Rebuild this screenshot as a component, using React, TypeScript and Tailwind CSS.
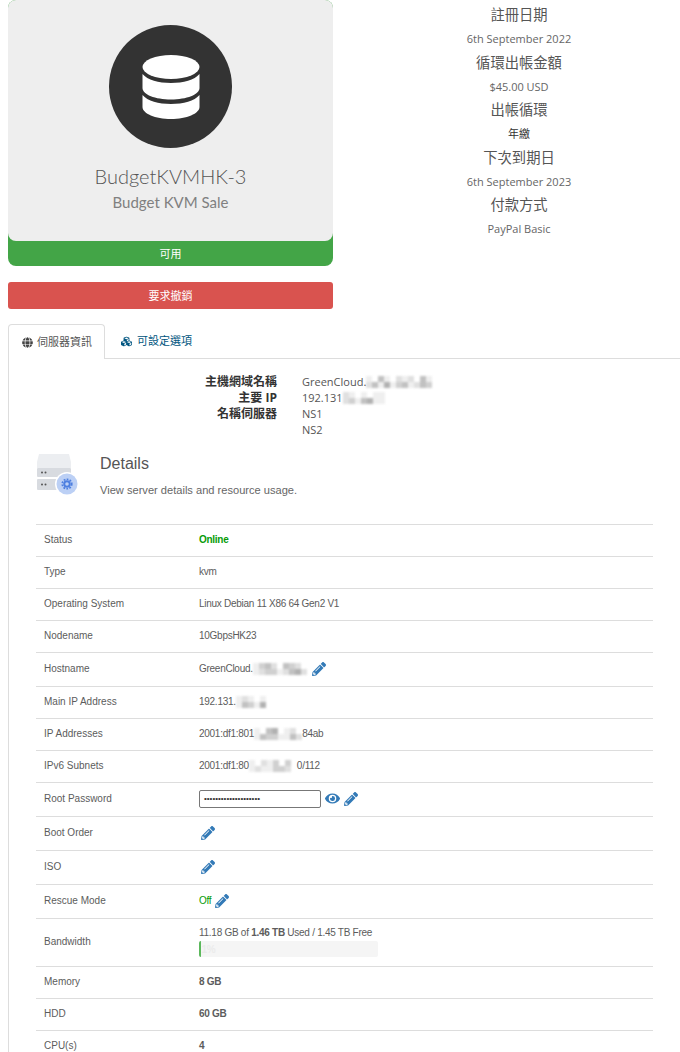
import React from 'react';
import { FaGlobe, FaCubes, FaPencilAlt, FaEye } from 'react-icons/fa';

const arial = 'font-["Liberation_Sans",Arial,"Noto_Sans_CJK_TC",sans-serif]';
const open = 'font-["Open_Sans","Noto_Sans_CJK_TC",sans-serif]';

const billing = [
  { label: '註冊日期', value: '6th September 2022' },
  { label: '循環出帳金額', value: '$45.00 USD' },
  { label: '出帳循環', value: '年繳', dark: true },
  { label: '下次到期日', value: '6th September 2023' },
  { label: '付款方式', value: 'PayPal Basic' },
];

// mosaic over the redacted parts, one string per row, digit = grey strength
function Blur({ rows }: { rows: string[] }) {
  return (
    <span className="inline-flex flex-col align-middle blur-[1px]">
      {rows.map((row, i) => (
        <span key={i} className="flex h-[6px]">
          {row.split('').map((c, j) => (
            <span key={j} className="w-[6px] h-[6px]" style={{ backgroundColor: `rgba(100,100,100,${Number(c) / 10})` }} />
          ))}
        </span>
      ))}
    </span>
  );
}

function Pencil({ className = '' }: { className?: string }) {
  return <FaPencilAlt className={`w-[14px] h-[14px] text-[#337ab7] ${className}`} />;
}

function Row({ label, h = 'h-[32px]', children }: { label: string; h?: string; children: React.ReactNode }) {
  return (
    <div className={`flex items-center border-t border-[#dddddd] pb-[2px] ${h}`}>
      <div className="w-[163px] pl-[8px] shrink-0">{label}</div>
      <div className="flex-1 flex items-center tracking-[-0.27px]">{children}</div>
    </div>
  );
}

export default function App() {
  return (
    <div className={`w-[680px] h-[1052px] overflow-hidden bg-white text-[#555555] ${open}`}>
      {/* top block */}
      <div className="flex">
        <div className="w-[325px] ml-[8px] shrink-0">
          <div className="rounded-[8px] bg-[#43a547] h-[266px]">
            <div className="h-[241px] rounded-[8px] bg-[#eeeeee] flex flex-col items-center pt-[25px]">
              <div className="w-[123px] h-[123px] rounded-full bg-[#333333] flex items-center justify-center">
                <svg viewBox="0 0 58 64" className="w-[58px] h-[64px]" fill="#ffffff">
                  <ellipse cx="29" cy="12" rx="28.5" ry="12" />
                  <path d="M.5 19c5 6 16 9 28.500 9s23.500-3 28.500-9v14c0 6.500-12.800 11.500-28.500 11.500S.5 39.500.5 33z" />
                  <path d="M.5 40c5 6 16 9 28.500 9s23.500-3 28.500-9v12c0 6.500-12.800 12-28.500 12S.5 58.500.5 52z" />
                </svg>
              </div>
              <div className="mt-[13px] text-[20px] leading-[30px] font-light text-[#555555] font-['Lato',sans-serif]">BudgetKVMHK-3</div>
              <div className="text-[15px] leading-[22px] text-[#808080] font-['Lato',sans-serif]">Budget KVM Sale</div>
            </div>
            <div className="h-[25px] pt-[1px] flex items-center justify-center text-white text-[11px]">可用</div>
          </div>
          <div className="mt-[16px] h-[27px] pt-[1px] rounded-[3px] bg-[#d9534f] flex items-center justify-center text-white text-[11px]">要求撤銷</div>
        </div>

        <div className="flex-1 ml-[25px] pt-[3px] text-center">
          {billing.map((b) => (
            <div key={b.label}>
              <div className="h-[24px] leading-[24px] text-[14.300px] text-[#555555]">{b.label}</div>
              <div className={`h-[23.500px] leading-[24px] text-[11px] ${b.dark ? 'text-[#333333]' : 'text-[#666666]'}`}>{b.value}</div>
            </div>
          ))}
        </div>
      </div>

      {/* tabs */}
      <div className="mt-[15px] ml-[8px] flex border-b border-[#dddddd] h-[35px] text-[11px]">
        <div className="w-[97px] h-[35px] bg-white border border-b-0 border-[#dddddd] rounded-t-[4px] flex items-center gap-[4px] pl-[13px]">
          <FaGlobe className="w-[11px] h-[11px] text-[#444444]" />
          <span>伺服器資訊</span>
        </div>
        <div className="flex items-center gap-[5px] pl-[16px] text-[#005580]">
          <FaCubes className="w-[11px] h-[11px]" />
          <span>可設定選項</span>
        </div>
      </div>

      {/* tab content */}
      <div className="ml-[8px] border-l border-[#dddddd] h-[700px]">
        <div className="pt-[15px] text-[11px] leading-[16px]">
          <div className="flex">
            <div className="w-[268px] text-right text-[12px] font-bold text-[#333333]">主機網域名稱</div>
            <div className="ml-[25px] flex items-center h-[16px]">GreenCloud.<Blur rows={['10410212041', '24151341243']} /></div>
          </div>
          <div className="flex">
            <div className="w-[268px] text-right text-[12px] font-bold text-[#333333]">主要 IP</div>
            <div className="ml-[25px] flex items-center h-[16px]">192.131<Blur rows={['2101011', '2314511']} /></div>
          </div>
          <div className="flex">
            <div className="w-[268px] text-right text-[12px] font-bold text-[#333333]">名稱伺服器</div>
            <div className="ml-[25px]">NS1</div>
          </div>
          <div className="flex">
            <div className="w-[268px]" />
            <div className="ml-[25px]">NS2</div>
          </div>
        </div>

        {/* module details */}
        <div className={`pl-[27px] pr-[27px] ${arial}`}>
          <div className="flex h-[86px] pt-[14px]">
            <svg viewBox="0 0 44 44" className="w-[44px] h-[44px] shrink-0">
              <path d="M3 2h30l2 8v6H1v-6z" fill="#eceef1" />
              <rect x="1" y="16" width="34" height="9" rx="1" fill="#d8dbe0" />
              <rect x="1" y="27" width="34" height="11" rx="1" fill="#d8dbe0" />
              <circle cx="6" cy="20.500" r="1" fill="#555" />
              <circle cx="9.500" cy="20.500" r="1" fill="#555" />
              <circle cx="6" cy="32.500" r="1" fill="#555" />
              <circle cx="9.500" cy="32.500" r="1" fill="#555" />
              <circle cx="31" cy="32" r="12" fill="#ffffff" />
              <circle cx="31" cy="32" r="10.500" fill="#bcd0f5" />
              <circle cx="31" cy="32" r="4.800" fill="none" stroke="#4d7fe0" strokeWidth="1.600" strokeDasharray="1.800 1.300" />
              <circle cx="31" cy="32" r="2.800" fill="none" stroke="#4d7fe0" strokeWidth="2" />
            </svg>
            <div className="ml-[20px] pt-[2px]">
              <div className="text-[16px] leading-[20px] text-[#555555]">Details</div>
              <div className="mt-[8px] text-[11.100px] leading-[16px] text-[#666666]">View server details and resource usage.</div>
            </div>
          </div>

          <div className="text-[10px] text-[#5c5c5c]">
            <Row label="Status"><span className="font-bold text-[#079b07]">Online</span></Row>
            <Row label="Type">kvm</Row>
            <Row label="Operating System">Linux Debian 11 X86 64 Gen2 V1</Row>
            <Row label="Nodename">10GbpsHK23</Row>
            <Row label="Hostname" h="h-[34px]">
              GreenCloud.<Blur rows={['134204320', '123312452']} />
              <Pencil className="ml-[5px]" />
            </Row>
            <Row label="Main IP Address">192.131.<Blur rows={['12101', '14315']} /></Row>
            <Row label="IP Addresses">
              2001:df1:801<Blur rows={['10450120', '14331142']} />84ab
            </Row>
            <Row label="IPv6 Subnets">
              2001:df1:80<Blur rows={['10213030', '12113320']} />0/112
            </Row>
            <Row label="Root Password" h="h-[34px]">
              <div className="w-[122px] h-[18px] border border-[#777777] rounded-[2px] flex items-center pl-[4px] text-[#333333] text-[8px] tracking-normal overflow-hidden">
                ••••••••••••••••••••
              </div>
              <FaEye className="ml-[4px] w-[15px] h-[15px] text-[#337ab7]" />
              <Pencil className="ml-[4px]" />
            </Row>
            <Row label="Boot Order" h="h-[34px]"><Pencil className="ml-[2px]" /></Row>
            <Row label="ISO" h="h-[34px]"><Pencil className="ml-[2px]" /></Row>
            <Row label="Rescue Mode" h="h-[34px]">
              <span className="text-[#079b07]">Off</span>
              <Pencil className="ml-[4px]" />
            </Row>
            <Row label="Bandwidth" h="h-[48px]">
              <div>
                <div className="leading-[14px]">11.18 GB of <b>1.46 TB</b> Used / 1.45 TB Free</div>
                <div className="mt-[1px] w-[179px] h-[16px] rounded-[2px] bg-[#f5f5f5] overflow-hidden flex items-center">
                  <div className="w-[1.500px] h-full bg-[#5cb85c]" />
                  <span className="pl-[1px] text-[#ebebeb] font-bold">1%</span>
                </div>
              </div>
            </Row>
            <Row label="Memory"><b>8 GB</b></Row>
            <Row label="HDD"><b>60 GB</b></Row>
            <Row label="CPU(s)"><b>4</b></Row>
          </div>
        </div>
      </div>
    </div>
  );
}
